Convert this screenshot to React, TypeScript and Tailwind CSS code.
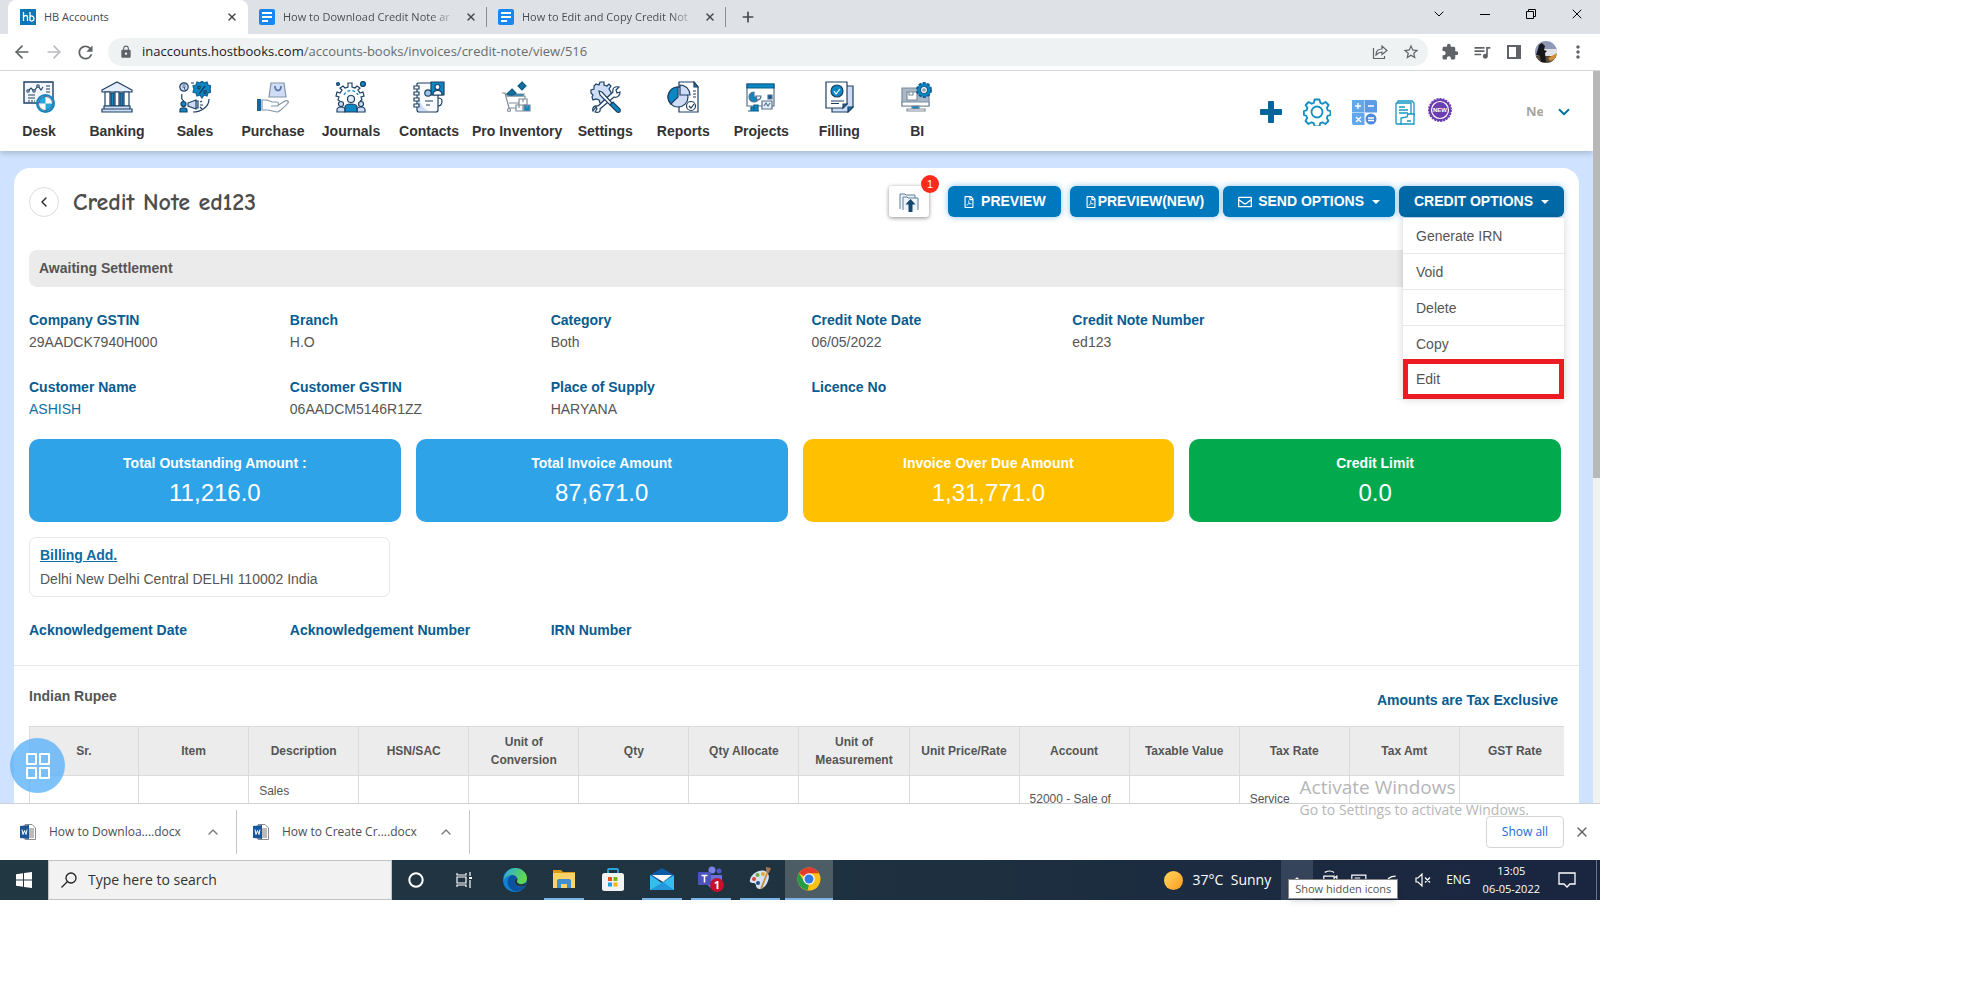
import type { ReactNode } from "react"
import { FaRegEnvelope, FaRegFilePdf } from "react-icons/fa"
import { MdExtension, MdLock, MdMoreVert, MdQueueMusic, MdRefresh, MdStarBorder } from "react-icons/md"
import { ArrowLeft, ArrowRight, ChevronDown, ChevronLeft, ChevronUp, Plus, X } from "lucide-react"

const navy = "#1d4063"
const blue = "#0d86c4"
const pale = "#cfdcf5"

type NavItem = { label: string; icon: ReactNode }

const navItems: NavItem[] = [
  {
    label: "Desk",
    icon: (
      <g stroke={navy} strokeWidth="1.1">
        <path d="M1 1h29v21H1z" fill="#f3f7fd" strokeWidth="1.4" />
        <path d="M5 10l3-3 3 3 4-5 3 4 2-3" />
        <circle cx="5" cy="10" r="1.200" fill="#fff" />
        <circle cx="11" cy="10" r="1.200" fill="#fff" />
        <circle cx="15" cy="5" r="1.200" fill="#fff" />
        <path d="M23 5h4M23 8h4M23 11h4M5 14h7M5 17h7" />
        <path d="M5 20h7" strokeDasharray="2 1" />
        <circle cx="22.500" cy="22.500" r="8.500" fill="#fff" stroke={blue} strokeWidth="2" />
        <path d="M22.500 22.500v-7a7 7 0 0 0-7 7zM22.500 22.500v7a7 7 0 0 0 7-7z" fill="#21a8e0" stroke="none" />
        <circle cx="22.500" cy="22.500" r="7" strokeWidth="0.800" />
      </g>
    ),
  },
  {
    label: "Banking",
    icon: (
      <g stroke={navy} strokeWidth="1.200">
        <path d="M1 9L16 1l15 8v2H1z" fill="#e6eefb" />
        <path d="M4 11h5v14H4zM23 11h5v14h-5zM14 11h4v14h-4z" fill="#fff" />
        <path d="M10 12h3v13h-3zM19 12h3v13h-3z" fill={blue} />
        <path d="M3 25h26v3H3zM1 28h30v3H1z" fill={pale} />
      </g>
    ),
  },
  {
    label: "Sales",
    icon: (
      <g stroke={navy} strokeWidth="1.200">
        <circle cx="5" cy="6" r="4.200" fill={pale} />
        <path d="M3.500 4h3M3.500 6h3M5 6l1 3" strokeWidth="0.800" />
        <path d="M23 0l2 2 3-1 1 3 3 1-1 3 1 3-3 1-1 3-3-1-2 3-2-3-3 1-1-3-3-1 1-3-1-3 3-1 1-3 3 1z" fill={blue} stroke="#0f5f91" />
        <path d="M26 5l-6 8" stroke="#0c2f4e" />
        <circle cx="20" cy="6.500" r="1.300" />
        <circle cx="26" cy="11" r="1.300" />
        <path d="M12 2h3M3 13c-1 4 0 6 2 7M30 18c0 8-8 13-16 13" />
        <path d="M9 22l8-3v9l-8-3zM17 20h2v7h-2z" fill={pale} />
        <path d="M21 21l2-1M21 24h3M21 26l2 2" />
        <circle cx="4.500" cy="23" r="2.500" fill={blue} />
        <path d="M1 31v-2c0-3 7-3 7 0v2z" fill={blue} />
      </g>
    ),
  },
  {
    label: "Purchase",
    icon: (
      <g stroke="#8495ab" strokeWidth="1.200">
        <path d="M14 2h13l2 14H12z" fill={pale} />
        <path d="M18 5c0 6 6 6 6 0" stroke="#5b7bb0" strokeWidth="1.800" />
        <path d="M0 18h4v12H0z" fill="#13689f" stroke="none" />
        <path d="M5 19h5l5 2h5c2 0 2 4 0 4h-6 6l8-5c2-1 4 0 3 2-3 4-6 6-10 9-4 0-7-2-11-2H5z" fill="#fff" />
      </g>
    ),
  },
  {
    label: "Journals",
    icon: (
      <g stroke={navy} strokeWidth="1.200">
        <path d="M5 20l-2-1 1-3-3-1 1-4 3 1 2-3-2-2 3-2 2 2 3-1V2h4v4l3 1 2-2 3 2-2 2 2 3 3-1 1 4-3 1 1 3-2 1" />
        <path d="M9 14c3-6 11-6 14 0" stroke={blue} strokeDasharray="3 2" />
        <circle cx="3" cy="3" r="1.500" fill={blue} />
        <circle cx="28" cy="3" r="2.500" fill={blue} />
        <circle cx="16" cy="18" r="3.500" fill="#e6eefb" />
        <circle cx="6" cy="23" r="2.500" fill={pale} />
        <circle cx="26" cy="23" r="2.500" fill={pale} />
        <path d="M2 31v-2c0-4 8-4 8 0v2zM22 31v-2c0-4 8-4 8 0v2z" fill={pale} />
        <path d="M10 31v-5c0-4 12-4 12 0v5z" fill={blue} />
      </g>
    ),
  },
  {
    label: "Contacts",
    icon: (
      <g stroke={navy} strokeWidth="1.200">
        <path d="M4 3q0-1 2-1h19v27q0 2-2 2H6q-2 0-2-2z" fill="#f9fbfe" />
        <path d="M5 14v16h11C10 28 7 22 5 14z" fill={pale} stroke="none" />
        <path d="M1 5h5v3H1zM1 11h5v3H1zM1 17h5v3H1zM1 23h5v3H1z" fill="#fff" />
        <path d="M18 1h13v13H18z" fill={blue} />
        <circle cx="24.500" cy="6" r="2.500" fill="#fff" />
        <path d="M20 14c0-6 9-6 9 0z" fill="#fff" />
        <circle cx="15" cy="12" r="3.200" fill="#9cc6ec" />
        <path d="M12 20h8M13 24h4M25 17q4 0 4 3 0 5-4 5" />
      </g>
    ),
  },
  {
    label: "Pro Inventory",
    icon: (
      <g stroke="#7e8b99" strokeWidth="1.200">
        <path d="M1 12h3l4 15h10M6 15h18v7H8" />
        <path d="M6 15h16l1-2H6z" fill={blue} />
        <path d="M21 1l4 4-4 4-4-4zM11 8l4 4-4 2-5-1z" fill="#14709f" stroke="#115b85" />
        <path d="M18 18h8v6h-8zM15 24h7v6h-7z" fill="#fff" />
        <path d="M23 24h6v6h-6z" fill={blue} />
        <path d="M22 18v3M18 24v3M26 24v3" />
        <circle cx="8" cy="29" r="1.500" />
      </g>
    ),
  },
  {
    label: "Settings",
    icon: (
      <g stroke={navy} strokeWidth="1.200">
        <path d="M11 1h4v3l3 1 2-2 2 2-2 3 2 3v4l-3 1-1 2-3 1-1 3h-3l-1-3-3-1-3 1-1-3 1-2-2-2V9l3-1 0-3 2-2 3 1z" fill={pale} />
        <path d="M4 30c-1-3 1-6 5-5L24 11c-1-4 2-6 6-5l-3 3 1 3 3-1c0 4-3 6-6 5L11 28c1 3-2 4-5 3l2-3-1-2z" fill="#fff" />
        <path d="M10 10l3 1 10 11-2 2L11 14z" fill="#fff" />
        <path d="M21 24l3-3 7 7c1 3-1 4-3 3z" fill={blue} />
      </g>
    ),
  },
  {
    label: "Reports",
    icon: (
      <g stroke={navy} strokeWidth="1.200">
        <path d="M12 1h15l4 5v25H12z" fill="#fff" />
        <path d="M27 1v5h4z" fill={blue} />
        <path d="M26 10h3M26 13h3M26 16h3" />
        <circle cx="11" cy="16" r="10" fill={pale} />
        <path d="M11 16V6A10 10 0 0 0 4 23z" fill={blue} />
        <path d="M13 14V4a10 10 0 0 1 10 10z" fill={pale} />
        <circle cx="24" cy="25" r="4.500" fill="#fff" />
        <path d="M22 25l2 2 3-4" />
      </g>
    ),
  },
  {
    label: "Projects",
    icon: (
      <g stroke="#54708c" strokeWidth="1.200">
        <path d="M2 3h27v22H2z" fill="#fff" />
        <path d="M2 3h27v4H2z" fill={blue} stroke="#0d5d8c" />
        <path d="M9 11a5 5 0 1 0 5 5H9z" fill={blue} />
        <path d="M11 15h5q0 4-4 4z" fill="#e6effb" />
        <path d="M23 14h4v4h-4z" fill="#0d5d8c" />
        <path d="M17 20h10v8H17zM19 25l2-3 2 3 2-3" fill="#e6effb" />
        <path d="M3 30h11M6 26h3v4H6zM9 24h4v6H9z" fill={blue} stroke="#0d5d8c" />
      </g>
    ),
  },
  {
    label: "Filling",
    icon: (
      <g stroke={navy} strokeWidth="1.200">
        <path d="M9 5h21v21l-5 5H9z" fill={pale} />
        <path d="M30 26h-5v5z" fill={blue} />
        <path d="M3 1h21v22l-4 4H3z" fill="#fff" />
        <path d="M24 23h-4v4z" fill={blue} />
        <circle cx="14" cy="10" r="6" fill={blue} />
        <path d="M11 10l2 3 4-5" stroke="#fff" />
        <path d="M8 20h13M8 22.500h8" />
      </g>
    ),
  },
  {
    label: "BI",
    icon: (
      <g stroke="#7e8b99" strokeWidth="1.200">
        <path d="M1 7h27v18H1z" fill="#a9b8c8" />
        <path d="M1 21h27v4H1z" fill="#fff" />
        <path d="M6 11h10v8H6zM8 11h4v3H8z" fill="#fff" />
        <path d="M11 25h7v3h-7z" fill={blue} />
        <path d="M6 28h18v2H6z" fill="#fff" />
        <circle cx="23" cy="9" r="7" fill={blue} stroke="#135f90" strokeWidth="2" strokeDasharray="3 1.500" />
        <circle cx="23" cy="9" r="3.500" fill="#fff" stroke="#135f90" />
        <circle cx="23" cy="9" r="1.200" />
      </g>
    ),
  },
]

const details = [
  { label: "Company GSTIN", value: "29AADCK7940H000" },
  { label: "Branch", value: "H.O" },
  { label: "Category", value: "Both" },
  { label: "Credit Note Date", value: "06/05/2022" },
  { label: "Credit Note Number", value: "ed123" },
]

const customer = [
  { label: "Customer Name", value: "ASHISH", link: true },
  { label: "Customer GSTIN", value: "06AADCM5146R1ZZ" },
  { label: "Place of Supply", value: "HARYANA" },
  { label: "Licence No", value: "" },
]

const totals = [
  { label: "Total Outstanding Amount :", value: "11,216.0", color: "bg-[#2ea3e8]" },
  { label: "Total Invoice Amount", value: "87,671.0", color: "bg-[#2ea3e8]" },
  { label: "Invoice Over Due Amount", value: "1,31,771.0", color: "bg-[#ffc000]" },
  { label: "Credit Limit", value: "0.0", color: "bg-[#03aa4d]" },
]

const columns = [
  "Sr.",
  "Item",
  "Description",
  "HSN/SAC",
  "Unit of Conversion",
  "Qty",
  "Qty Allocate",
  "Unit of Measurement",
  "Unit Price/Rate",
  "Account",
  "Taxable Value",
  "Tax Rate",
  "Tax Amt",
  "GST Rate",
]

const menuItems = ["Generate IRN", "Void", "Delete", "Copy", "Edit"]

function DocsIcon() {
  return (
    <svg viewBox="0 0 16 16" className="size-4 shrink-0">
      <rect width="16" height="16" rx="2" fill="#1a86f0" />
      <path d="M3 4h10M3 8h10M3 12h6" stroke="#fff" strokeWidth="2" />
    </svg>
  )
}

function WordIcon() {
  return (
    <svg viewBox="0 0 16 16" className="size-4 shrink-0">
      <path d="M5 0.500h7l3.500 3.500v11.500H5z" fill="#fff" stroke="#8a8a8a" />
      <path d="M8 5h6M8 7h6M8 9h6M8 11h6M8 13h6" stroke="#777" />
      <path d="M0 2l9-1v14l-9-1z" fill="#1b5599" />
      <path d="M2 5.500l1 5 1.500-4 1.500 4 1-5" fill="none" stroke="#fff" />
    </svg>
  )
}

function TabStrip() {
  const tabs = ["How to Download Credit Note ar", "How to Edit and Copy Credit Not"]
  return (
    <div className="flex h-[34px] shrink-0 bg-[#dee1e6] pl-2 text-[11px] text-[#45494d]">
      <div className="flex w-60 items-center rounded-t-lg bg-white pr-2 pl-3">
        <svg viewBox="0 0 16 16" className="size-4">
          <rect width="16" height="16" fill="#0d76b5" />
          <path d="M3.500 3v9M3.500 8c1-2 4-2 4 0v4M10 3v9M10 8c1-2 4-1 4 1.500S11 13 10 11" fill="none" stroke="#fff" strokeWidth="1.300" />
        </svg>
        <span className="ml-2 flex-1">HB Accounts</span>
        <button aria-label="Close tab" className="p-0.5">
          <X className="size-3" strokeWidth={3} />
        </button>
      </div>
      {tabs.map((tab) => (
        <div key={tab} className="flex w-[239px] items-center pl-[11px]">
          <DocsIcon />
          <span className="ml-2 w-[174px] overflow-hidden bg-linear-to-r from-[#45494d] from-85% to-transparent bg-clip-text whitespace-nowrap text-transparent">
            {tab}
          </span>
          <button aria-label="Close tab" className="ml-1.5 p-0.5">
            <X className="size-3" strokeWidth={3} />
          </button>
          <span className="ml-auto h-5 w-px bg-[#8b8f94]" />
        </div>
      ))}
      <button aria-label="New tab" className="ml-3.5">
        <Plus className="size-4" strokeWidth={2.5} />
      </button>
      <div className="ml-auto flex h-7 text-black">
        <button aria-label="Search tabs" className="flex w-[46px] items-center justify-center">
          <ChevronDown className="size-4" strokeWidth={1.5} />
        </button>
        <button aria-label="Minimize" className="flex w-[46px] items-center justify-center">
          <span className="h-px w-2.5 bg-black" />
        </button>
        <button aria-label="Restore" className="flex w-[46px] items-center justify-center">
          <svg viewBox="0 0 10 10" className="size-2.5" fill="none" stroke="#000">
            <path d="M0.500 2.500h7v7h-7zM2.500 2.500v-2h7v7h-2" />
          </svg>
        </button>
        <button aria-label="Close" className="flex w-[46px] items-center justify-center">
          <X className="size-4" strokeWidth={1.5} />
        </button>
      </div>
    </div>
  )
}

function AddressBar() {
  return (
    <div className="flex h-[37px] shrink-0 items-center border-b border-[#d5d7da] bg-white pr-1.5 text-[#5f6368]">
      <button aria-label="Back" className="flex w-8 justify-end">
        <ArrowLeft className="size-5" />
      </button>
      <button aria-label="Forward" className="flex w-8 justify-end text-[#b9bbbe]">
        <ArrowRight className="size-5" />
      </button>
      <button aria-label="Reload" className="flex w-8 justify-end">
        <MdRefresh className="size-[21px]" />
      </button>
      <div className="ml-3 flex h-7 flex-1 items-center rounded-full bg-[#eff2f3] pr-2 pl-[11px]">
        <MdLock className="size-3.5" />
        <a href="#" className="ml-[9px] flex-1 text-[13px] text-[#686c70]">
          <span className="text-[#202124]">inaccounts.hostbooks.com</span>
          /accounts-books/invoices/credit-note/view/516
        </a>
        <button aria-label="Share" className="flex w-8 justify-center">
          <svg viewBox="0 0 16 16" className="size-4" fill="none" stroke="#5f6368" strokeWidth="1.200">
            <path d="M1.500 4v10.500h11V12M4 11c0-4 2-6 6-6V2l5 4.500-5 4V8c-3 0-4 1-6 3z" />
          </svg>
        </button>
        <button aria-label="Bookmark" className="flex w-6 justify-end">
          <MdStarBorder className="size-[18px]" />
        </button>
      </div>
      <div className="ml-1.5 flex">
        <button aria-label="Extensions" className="flex w-8 items-center justify-center">
          <MdExtension className="size-[18px]" />
        </button>
        <button aria-label="Media" className="flex w-8 items-center justify-center">
          <MdQueueMusic className="size-5" />
        </button>
        <button aria-label="Side panel" className="flex w-8 items-center justify-center">
          <svg viewBox="0 0 14 14" className="size-3.5">
            <path d="M0 0h14v14H0zM2 2v10h7V2z" fill="#5f6368" fillRule="evenodd" />
          </svg>
        </button>
        <button aria-label="Profile" className="flex w-8 items-center justify-center">
          <svg viewBox="0 0 22 22" className="size-[22px]">
            <clipPath id="avatar">
              <circle cx="11" cy="11" r="11" />
            </clipPath>
            <g clipPath="url(#avatar)">
              <rect width="22" height="22" fill="#8f99b5" />
              <path d="M8 8h14v7H8z" fill="#dfe3e8" />
              <path d="M0 15h22v7H0z" fill="#5a4a3c" />
              <path d="M13 17l9-5v5l-7 3z" fill="#d08f35" />
              <path d="M4 4l3-2 3 3-1 4 3 1-2 2 1 9H6l-1-6-4-1 2-6z" fill="#15161a" />
            </g>
          </svg>
        </button>
        <button aria-label="Menu" className="flex w-8 items-center justify-center">
          <MdMoreVert className="size-5" />
        </button>
      </div>
    </div>
  )
}

function AppHeader() {
  return (
    <header className="relative flex h-20 items-center bg-white pr-5 shadow-[0_2px_6px_rgba(0,0,0,0.2)]">
      <nav className="flex">
        {navItems.map((item) => (
          <a key={item.label} href="#" className="flex min-w-[78px] flex-col items-center px-1 text-sm font-bold text-[#333]">
            <svg viewBox="0 0 32 32" className="size-8" fill="none">
              {item.icon}
            </svg>
            <span className="mt-2 leading-5">{item.label}</span>
          </a>
        ))}
      </nav>
      <div className="mt-0.5 ml-auto flex items-center">
        <button aria-label="Add">
          <svg viewBox="0 0 22 22" className="size-[22px]">
            <path d="M9 0h4q1 0 1 1v7h7q1 0 1 1v4q0 1-1 1h-7v7q0 1-1 1H9q-1 0-1-1v-7H1q-1 0-1-1V9q0-1 1-1h7V1q0-1 1-1z" fill="#06649a" />
          </svg>
        </button>
        <button aria-label="Preferences" className="ml-[21px]">
          <svg viewBox="0 0 28 28" className="size-7" fill="none" stroke="#0f8fc4" strokeWidth="1.800" strokeLinejoin="round">
            <path d="M11.500 1.500h5l.8 3.300 2.300 1 3-1.800 3 3-1.800 3 1 2.300 2.700.7v4l-2.900.8-.8 2.200 1.600 3-3 3-3-1.700-2.200.9-.7 3.300h-5l-.8-3.300-2.200-.9-3 1.700-3-3 1.700-3-.9-2.200L.9 17v-4l2.600-.7 1-2.300L2.700 7l3-3 3 1.800 2.200-1z" />
            <circle cx="14" cy="14" r="5.500" />
          </svg>
        </button>
        <button aria-label="Calculator" className="ml-[21px]">
          <svg viewBox="0 0 25 25" className="size-[25px]">
            <path d="M0 0h12.500v12.500H0zM0 13h12.500v12H2q-2 0-2-2z" fill="#62a8ee" />
            <path d="M13 0h10q2 0 2 2v10.500H13z" fill="#5d9be4" />
            <circle cx="19" cy="19" r="5.500" fill="#4a8bdc" />
            <path d="M6 3v6M3 6h6M16 6h6M4 17l5 5M9 17l-5 5M16 18h6M16 20.500h6" stroke="#fff" strokeWidth="1.400" />
          </svg>
        </button>
        <button aria-label="Documents" className="ml-[18px]">
          <svg viewBox="0 0 20 25" className="h-[25px] w-5" fill="none" stroke="#1596c4" strokeWidth="1.300">
            <path d="M3 3V1h14l2 2v13M1 3h15v11M1 3v20q0 1 1 1h5M4 7h6M4 10h9M4 13h9" />
            <path d="M6 24v-6l6-1 1-3h6v10zM12 21h4" fill="#fff" />
          </svg>
        </button>
        <button aria-label="What's new" className="mb-1 ml-3">
          <svg viewBox="0 0 26 26" className="size-[26px]">
            <circle cx="13" cy="13" r="11" fill="#6c3fb0" stroke="#6c3fb0" strokeWidth="2" strokeDasharray="2 1" />
            <circle cx="13" cy="13" r="8.500" fill="none" stroke="#fff" strokeWidth="1.200" />
            <text x="13" y="15" textAnchor="middle" fontSize="6" fontWeight="bold" fill="#fff">
              NEW
            </text>
          </svg>
        </button>
        <span className="ml-[73px] w-[17px] overflow-hidden font-[Open_Sans] text-[13px] font-bold text-[#a5a5a5]">Ne</span>
        <button aria-label="Account" className="ml-3">
          <ChevronDown className="size-[18px] text-[#06739f]" strokeWidth={2.5} />
        </button>
      </div>
    </header>
  )
}

function Caret() {
  return <span className="ml-2 border-x-4 border-t-4 border-x-transparent border-t-white" />
}

function TitleRow() {
  const button =
    "flex h-[31px] items-center rounded-md px-[15px] text-[14px] font-bold whitespace-nowrap text-white shadow-[0_0_6px_rgba(30,140,220,0.5)]"
  return (
    <div className="flex items-center px-[15px]">
      <button aria-label="Go back" className="flex size-[30px] items-center justify-center rounded-full border border-[#ddd]">
        <ChevronLeft className="size-4 text-[#222]" />
      </button>
      <h1 className="ml-3.5 font-['Comic_Sans_MS','Comic_Neue',cursive] text-2xl leading-[30px] font-bold text-[#4d4d4d]">
        Credit Note ed123
      </h1>
      <div className="ml-auto flex items-center">
        <button aria-label="Attachments" className="relative flex h-[31px] w-10 items-center justify-center rounded-[3px] bg-white shadow-[0_1px_4px_rgba(0,0,0,0.45)]">
          <svg viewBox="0 0 20 20" className="size-5" fill="none" stroke="#5d7f9d">
            <path d="M1 17V2h5l1 1h9v3M4 18V5h4l1 1h10v12" fill="#eef4fa" />
            <path d="M11.500 7l5 5.500h-3V20h-4v-7.500h-3z" fill="#14476f" stroke="none" />
          </svg>
          <span className="absolute -top-[11px] -right-2.5 flex size-[18px] items-center justify-center rounded-full bg-[#ff2a1a] text-[11px] text-white">
            1
          </span>
        </button>
        <button className={`${button} ml-[19px] bg-[#0078bd]`}>
          <FaRegFilePdf className="mr-1.5 size-3" />
          PREVIEW
        </button>
        <button className={`${button} ml-[9px] bg-[#0078bd]`}>
          <FaRegFilePdf className="mr-px size-3" />
          PREVIEW(NEW)
        </button>
        <button className={`${button} ml-1 bg-[#0078bd]`}>
          <FaRegEnvelope className="mr-1.5 size-3.5" />
          SEND OPTIONS
          <Caret />
        </button>
        <div className="relative ml-1">
          <button aria-expanded="true" className={`${button} bg-[#0069a5]`}>
            CREDIT OPTIONS
            <Caret />
          </button>
          <ul className="absolute top-8 right-0 z-10 w-[161px] bg-white text-sm text-[#555] shadow-[0_0_8px_rgba(0,0,0,0.18)]">
            {menuItems.map((item) => (
              <li key={item} className="border-b border-[#e8e8e8] last:border-0">
                <a
                  href="#"
                  className={
                    item === "Edit"
                      ? "-mt-[3px] flex h-10 items-center border-[5px] border-[#ec1c24] pl-2"
                      : "flex h-[35px] items-center pl-[13px]"
                  }
                >
                  {item}
                </a>
              </li>
            ))}
          </ul>
        </div>
      </div>
    </div>
  )
}

function Field({ label, value, link }: { label: string; value?: string; link?: boolean }) {
  return (
    <div className="px-[15px] text-sm leading-[22px]">
      <div className="font-bold text-[#075c91]">{label}</div>
      {link ? (
        <a href="#" className="text-[#0f70a8]">
          {value}
        </a>
      ) : (
        <div>{value}</div>
      )}
    </div>
  )
}

function ItemsTable() {
  const cell = "border-r border-[#d9dbdc] last:border-r-0 first:border-l"
  return (
    <div className="mx-[15px] mt-[15px] overflow-hidden">
      <table className="w-[calc(100%+6px)] table-fixed border-separate border-spacing-0 text-xs leading-[18px]">
        <thead className="bg-[#ececec]">
          <tr>
            {columns.map((col) => (
              <th key={col} className={`${cell} h-[50px] border-y px-2`}>
                {col}
              </th>
            ))}
          </tr>
        </thead>
        <tbody>
          <tr>
            {columns.map((col) => (
              <td key={col} className={`${cell} h-20 px-2.5 align-top`}>
                {col === "Description" && <div className="pt-1.5">Sales</div>}
                {col === "Account" && <div className="pt-3.5">52000 - Sale of</div>}
                {col === "Tax Rate" && <div className="pt-3.5">Service</div>}
              </td>
            ))}
          </tr>
        </tbody>
      </table>
    </div>
  )
}

function CreditNote() {
  return (
    <main className="mx-3.5 mt-[17px] rounded-t-2xl bg-white pt-[18px] text-[#555]">
      <TitleRow />
      <div className="mx-[15px] mt-[33px] rounded-lg bg-[#ebebeb] px-2.5 py-2 text-sm leading-[21px] font-bold">
        Awaiting Settlement
      </div>
      <div className="mt-[22px] grid grid-cols-6 gap-y-[23px]">
        {details.map((d) => (
          <Field key={d.label} {...d} />
        ))}
        <div />
        {customer.map((d) => (
          <Field key={d.label} {...d} />
        ))}
      </div>
      <div className="mt-[19px] grid grid-cols-4 gap-[15px] pr-[18px] pl-[15px] text-center text-white">
        {totals.map((t) => (
          <div key={t.label} className={`${t.color} rounded-[10px] pt-[13px] pb-2.5`}>
            <div className="text-sm leading-[22px] font-bold">{t.label}</div>
            <div className="text-2xl leading-[38px]">{t.value}</div>
          </div>
        ))}
      </div>
      <div className="mt-[15px] ml-[15px] w-[361px] rounded-[7px] border border-[#e6e6e6] px-2.5 py-[5px] text-sm leading-6">
        <a href="#" className="font-bold text-[#0f6ba3] underline">
          Billing Add.
        </a>
        <div>Delhi New Delhi Central DELHI 110002 India</div>
      </div>
      <div className="mt-[22px] grid grid-cols-6">
        <Field label="Acknowledgement Date" />
        <Field label="Acknowledgement Number" />
        <Field label="IRN Number" />
      </div>
      <hr className="mt-6 border-[#e6e6e6]" />
      <div className="mt-[19px] flex h-[26px] justify-between pr-[21px] pl-[15px] text-sm leading-[22px] font-bold">
        <h2>Indian Rupee</h2>
        <span className="self-end text-[#075c91]">Amounts are Tax Exclusive</span>
      </div>
      <ItemsTable />
    </main>
  )
}

function DownloadBar() {
  return (
    <div className="flex h-[57px] shrink-0 items-center border-t border-[#cfd1d3] bg-white text-xs text-[#4a4e52]">
      {["How to Downloa....docx", "How to Create Cr....docx"].map((file) => (
        <div key={file} className="flex h-11 w-[233px] items-center border-r border-[#c4c6c8] pr-[15px] pl-4 first:w-[237px] first:pl-5">
          <WordIcon />
          <a href="#" className="ml-[13px] flex-1 whitespace-nowrap">
            {file}
          </a>
          <button aria-label="Download options">
            <ChevronUp className="size-4 text-[#777]" />
          </button>
        </div>
      ))}
      <button className="ml-auto h-8 w-[78px] rounded border border-[#d3d5d8] text-[#2268d8]">Show all</button>
      <button aria-label="Close downloads" className="mr-2.5 ml-2.5">
        <X className="size-4 text-[#5f6368]" />
      </button>
    </div>
  )
}

function TaskIcon({ label, active, running, children }: { label: string; active?: boolean; running?: boolean; children: ReactNode }) {
  return (
    <button
      aria-label={label}
      className={`flex h-10 w-12 items-center justify-center ${active ? "border-b-2 border-[#7fb4e6] bg-[#4c5d66]" : ""}`}
    >
      <span className={`flex h-full w-10 items-center justify-center ${running ? "border-b-2 border-[#7fb4e6]" : ""}`}>{children}</span>
    </button>
  )
}

function Taskbar() {
  return (
    <div className="flex h-10 shrink-0 items-center bg-linear-to-r from-[#213842] via-[#1f3240] to-[#1a2540] text-white">
      <button aria-label="Start" className="flex w-12 justify-center">
        <svg viewBox="0 0 16 16" className="size-4" fill="#fff">
          <path d="M0 2.300l7-1v6.200H0zM8 1.100L16 0v7.500H8zM0 8.500h7v6.200l-7-1zM8 8.500h8V16l-8-1.100z" />
        </svg>
      </button>
      <label className="flex h-10 w-[344px] items-center border border-[#bfc1c2] bg-[#f2f2f2] pl-3">
        <svg viewBox="0 0 16 16" className="size-4" fill="none" stroke="#222" strokeWidth="1.300">
          <circle cx="10" cy="6" r="5" />
          <path d="M6.500 9.500L0.500 15.500" />
        </svg>
        <input
          aria-label="Search"
          placeholder="Type here to search"
          className="ml-[11px] flex-1 bg-transparent text-sm text-[#333] outline-none placeholder:text-[#333]"
        />
      </label>
      <TaskIcon label="Cortana">
        <svg viewBox="0 0 16 16" className="size-4" fill="none" stroke="#fff" strokeWidth="2">
          <circle cx="8" cy="8" r="6.700" />
        </svg>
      </TaskIcon>
      <TaskIcon label="Task view">
        <svg viewBox="0 0 16 16" className="size-4" fill="none" stroke="#fff" strokeWidth="1.200">
          <path d="M1 1v2h9V1M1 5h9v6H1zM1 15v-2h9v2M14 0v4M14 8v8" />
          <path d="M13 5h3v2h-3z" fill="#fff" stroke="none" />
        </svg>
      </TaskIcon>
      <div className="ml-[3px] flex gap-px">
        <TaskIcon label="Edge">
          <svg viewBox="0 0 24 24" className="size-6">
            <defs>
              <linearGradient id="edge" x1="0" y1="0" x2="1" y2="0.400">
                <stop offset="0" stopColor="#2aa9e0" />
                <stop offset="1" stopColor="#62d94a" />
              </linearGradient>
            </defs>
            <circle cx="12" cy="12" r="12" fill="#1480d4" />
            <path d="M1 9C3 3 7 0 12 0c7 0 12 5 12 10 0 4-3 6-6 6-4 0-5-1-4-3 1-4-2-6-5-6-4 0-7 2-8 5z" fill="url(#edge)" />
            <path d="M9 7c-4 2-6 7-3 12 2 3 6 5 9 4 4-1 7-3 7-5-4 2-9 1-10-3-1-3 1-4 2-5-1-2-3-3-5-3z" fill="#0b53a0" />
            <path d="M14 10c-2 1-3 3-2 5 1 4 6 4 10 3l2-4c-3 3-10 3-10-1 0-1 1-2 0-3z" fill="#213842" />
          </svg>
        </TaskIcon>
        <TaskIcon label="File Explorer" running>
          <svg viewBox="0 0 24 20" className="h-5 w-6">
            <path d="M1 1h8l2 2h12v16H1z" fill="#d99a1c" />
            <path d="M1 4h22v15H1z" fill="#fbd265" />
            <path d="M5 19v-7q0-2 2-2h10q2 0 2 2v7h-4v-4H9v4z" fill="#3f8fd0" />
          </svg>
        </TaskIcon>
        <TaskIcon label="Store">
          <svg viewBox="0 0 24 24" className="size-6">
            <path d="M7 6V2q0-1 1-1h8q1 0 1 1v4" fill="none" stroke="#29a6dc" strokeWidth="1.800" />
            <rect x="1" y="5" width="22" height="18" rx="2.500" fill="#f2f2f2" />
            <path d="M7 9h4v4H7z" fill="#ea4f22" />
            <path d="M12.500 9h4v4h-4z" fill="#7cb70c" />
            <path d="M7 14.500h4v4H7z" fill="#1aa0e8" />
            <path d="M12.500 14.500h4v4h-4z" fill="#f9b410" />
          </svg>
        </TaskIcon>
        <TaskIcon label="Mail" running>
          <svg viewBox="0 0 24 22" className="h-[22px] w-6">
            <path d="M0 7l12-7 12 7v5H0z" fill="#0c5aa6" />
            <path d="M0 7v15h24V7l-12 8z" fill="#35bdf2" />
            <path d="M2 7h20l-9 7z" fill="#f4f6f8" />
            <path d="M13 14l11 8H0z" fill="#2498dc" />
          </svg>
        </TaskIcon>
        <TaskIcon label="Teams" running>
          <svg viewBox="0 0 26 26" className="size-[26px]">
            <circle cx="14" cy="4" r="3.500" fill="#7b83eb" />
            <circle cx="21" cy="5" r="2.500" fill="#5059c9" />
            <path d="M9 9h15v9c0 5-12 7-15 0z" fill="#6a72d8" />
            <rect x="0" y="6" width="13" height="13" rx="1" fill="#4b53bc" />
            <path d="M3.500 9.500h6M6.500 9.500v7" stroke="#fff" strokeWidth="1.600" />
            <circle cx="19" cy="19" r="7" fill="#c8102e" />
            <text x="19" y="23" textAnchor="middle" fontSize="11" fontWeight="bold" fill="#fff">
              1
            </text>
          </svg>
        </TaskIcon>
        <TaskIcon label="Paint" running>
          <svg viewBox="0 0 24 24" className="size-6">
            <path d="M2 13C3 7 11 2 17 4c6 3 4 9 1 14-3 4-7 5-9 3-2-3 0-4-3-5-3 0-5-1-4-3z" fill="#d3e3f1" />
            <circle cx="6" cy="12" r="2" fill="#d14a36" />
            <circle cx="9.500" cy="8" r="2" fill="#77a93a" />
            <circle cx="15" cy="7" r="2" fill="#e4a92f" />
            <circle cx="10" cy="16" r="2" fill="#234f8e" />
            <path d="M20 4L13 22" stroke="#c78a3e" strokeWidth="1.800" />
            <path d="M18 0l5 1-2 5-3-1z" fill="#a9744a" />
          </svg>
        </TaskIcon>
        <TaskIcon label="Chrome" active>
          <svg viewBox="0 0 24 24" className="size-6">
            <circle cx="12" cy="12" r="11.500" fill="#fbc116" />
            <path d="M12 12L2 6.300A11.500 11.500 0 0 1 22 6.300H12z" fill="#e33b2e" />
            <path d="M2 6.300l5.200 8.500L12 17l-1.500 6.400A11.500 11.500 0 0 1 2 6.300z" fill="#269b47" />
            <circle cx="12" cy="12" r="5.800" fill="#fff" />
            <circle cx="12" cy="12" r="4.500" fill="#2f7ae5" />
          </svg>
        </TaskIcon>
      </div>
      <div className="ml-auto flex items-center text-xs">
        <span className="size-[19px] rounded-full bg-linear-to-br from-[#ffd75a] to-[#ff9a1a]" />
        <span className="ml-2.5 text-[14px] whitespace-nowrap">37°C&nbsp; Sunny</span>
        <div className="relative ml-2.5 flex h-10 w-[126px] items-center">
          <button aria-label="Show hidden icons" className="flex h-10 w-8 items-center justify-center bg-[#35445a]">
            <ChevronUp className="size-4" />
          </button>
          <svg viewBox="0 0 90 16" className="mb-1 ml-2 h-4 w-[84px]" fill="none" stroke="#fff" strokeWidth="1.300">
            <path d="M4 2q6-3 10 0M3 6h11v9H3zM14 8l3-2v8M33 5h15v9H33zM36 8h6M70 14q1-8 10-8M74 14q1-4 6-4" />
          </svg>
          <span role="tooltip" className="absolute top-[19px] left-[7px] border border-[#888] bg-white px-1.5 text-[11px] leading-[18px] whitespace-nowrap text-[#555] shadow-md">
            Show hidden icons
          </span>
        </div>
        <svg viewBox="0 0 16 14" className="ml-2 h-3.5 w-4" fill="none" stroke="#fff" strokeWidth="1.200">
          <path d="M1 5h2l4-4v12L3 9H1zM10 4.500l5 5M15 4.500l-5 5" />
        </svg>
        <span className="ml-[15px]">ENG</span>
        <div className="ml-3 text-center text-[11px] leading-[18px] whitespace-nowrap">
          <div>13:05</div>
          <div>06-05-2022</div>
        </div>
        <button aria-label="Notifications" className="ml-[18px]">
          <svg viewBox="0 0 18 18" className="size-[18px]" fill="none" stroke="#fff" strokeWidth="1.300">
            <path d="M1 2h16v11h-5l-3 3-3-3H1z" />
          </svg>
        </button>
        <span className="mr-[3px] ml-5 h-10 w-px bg-[#6b7487]" />
      </div>
    </div>
  )
}

export default function App() {
  return (
    <div className="h-screen bg-white pr-[362px] pb-[88px] font-['Open_Sans',sans-serif]">
      <div className="relative flex h-full flex-col">
        <TabStrip />
        <AddressBar />
        <div className="flex min-h-0 flex-1 font-['Liberation_Sans',Arial,sans-serif]">
          <div className="min-w-0 flex-1 overflow-hidden bg-[#cfe2ff]">
            <AppHeader />
            <CreditNote />
          </div>
          <div className="w-[7px] bg-[#f1f1f1]">
            <div className="h-5/9 bg-[#b8b8b8]" />
          </div>
        </div>
        <DownloadBar />
        <Taskbar />

        <button
          aria-label="Quick menu"
          className="absolute bottom-[107px] left-2.5 flex size-[55px] items-center justify-center rounded-full bg-[#5eb3fa]/80"
        >
          <svg viewBox="0 0 26 26" className="size-[26px]" fill="none" stroke="#fff" strokeWidth="2">
            <path d="M2 1h9v10H2zM15 1h9v10h-9zM2 15h9v10H2zM15 15h9v10h-9z" strokeLinejoin="round" />
          </svg>
        </button>
        <div className="pointer-events-none absolute right-[71px] bottom-[79px] text-[#b4b6b8]">
          <div className="text-[19px] leading-6">Activate Windows</div>
          <div className="text-sm leading-[22px]">Go to Settings to activate Windows.</div>
        </div>
      </div>
    </div>
  )
}
